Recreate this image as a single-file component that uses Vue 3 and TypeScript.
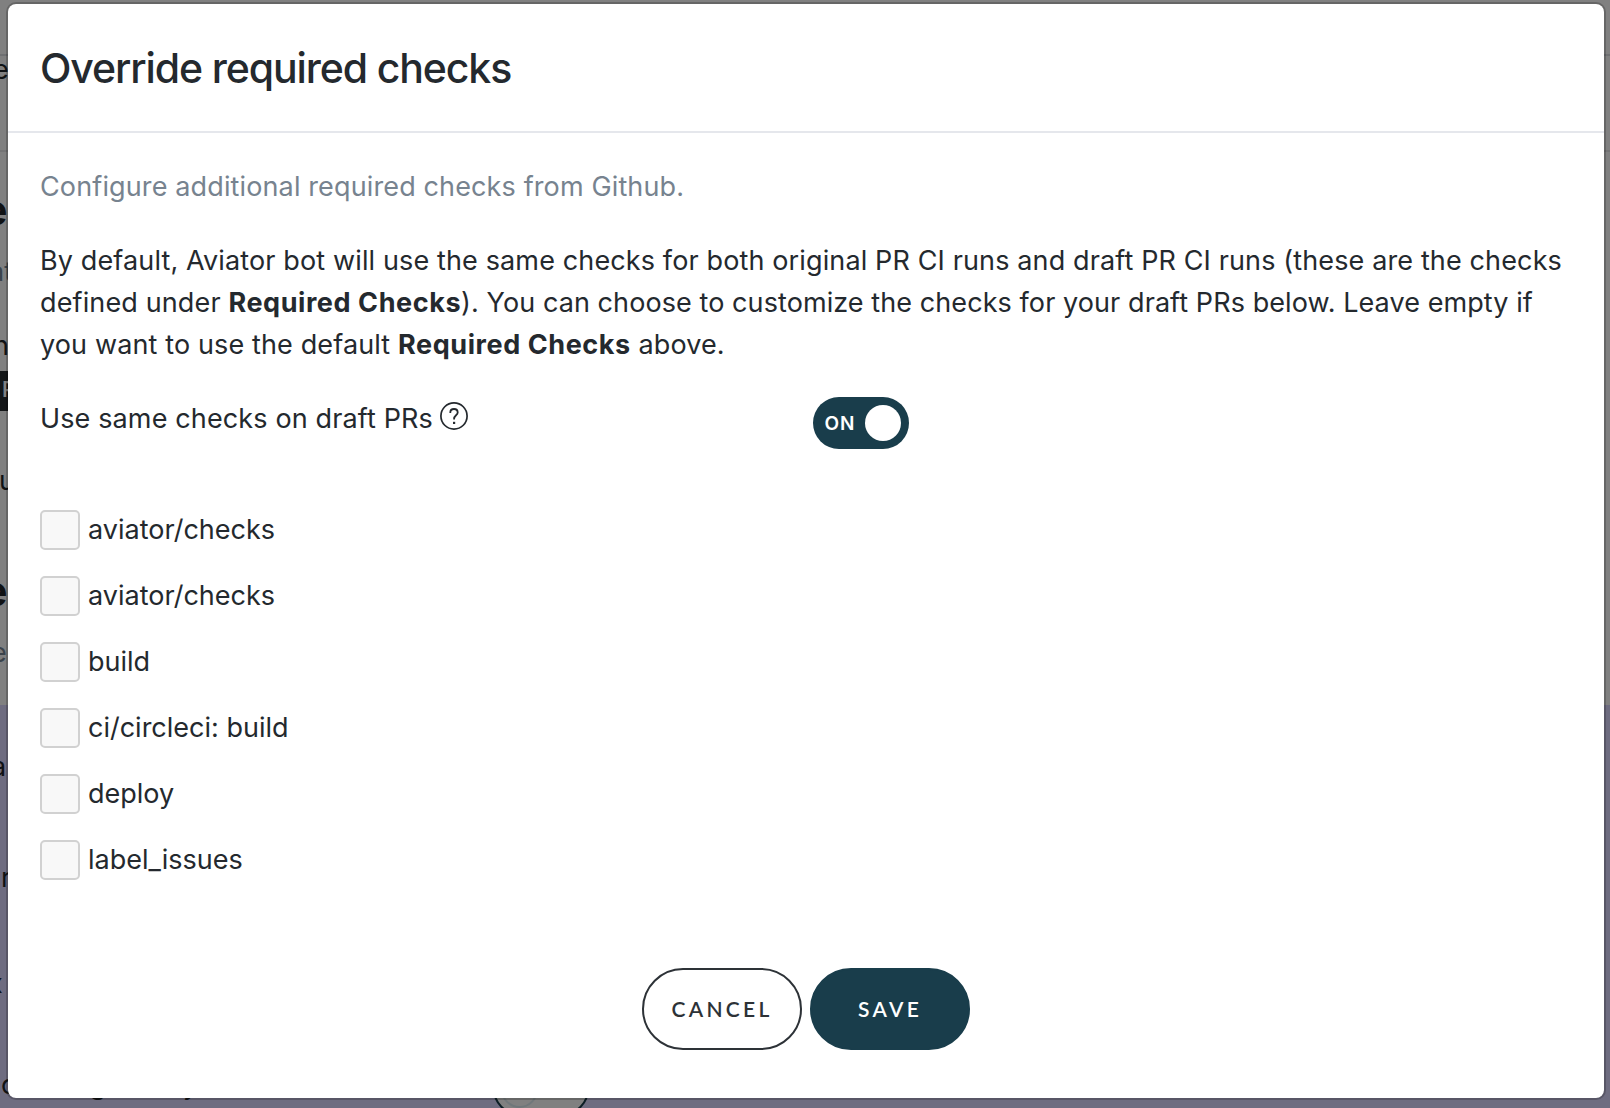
<script setup lang="ts">
import { ref } from 'vue'

interface Check {
  name: string
  checked: boolean
}

const checks = ref<Check[]>([
  { name: 'aviator/checks', checked: false },
  { name: 'aviator/checks', checked: false },
  { name: 'build', checked: false },
  { name: 'ci/circleci: build', checked: false },
  { name: 'deploy', checked: false },
  { name: 'label_issues', checked: false },
])

const sameOnDraft = ref(true)
</script>

<template>
  <div class="screen">
    <div class="page">
      <div class="page-nav"><span class="frag nav-frag">e</span></div>
      <div class="page-main">
        <span class="frag heading h-one">e</span>
        <span class="frag muted m-one">at</span>
        <span class="frag n-one">n</span>
        <span class="tag">P</span>
        <span class="frag u-one">u</span>
        <span class="frag heading h-two">e</span>
        <span class="frag muted m-two">e</span>
      </div>
      <div class="page-panel">
        <span class="frag p-a">a</span>
        <span class="frag p-r">r</span>
        <span class="frag p-x">x</span>
        <div class="panel-row">
          <span class="frag">c</span>
          <span class="frag p-g">g</span>
          <span class="frag p-y">y</span>
          <span class="off-toggle"><span class="off-knob"></span></span>
        </div>
      </div>
    </div>

    <div class="modal" role="dialog">
      <header class="modal-head">
        <h1>Override required checks</h1>
      </header>
      <div class="modal-body">
        <p class="lead">Configure additional required checks from Github.</p>
        <p>
          By default, Aviator bot will use the same checks for both original PR CI runs and draft PR CI runs (these are the checks<br />
          defined under <b>Required Checks</b><span class="tight">). You can choose to customize the checks for your draft PRs below. Leave empty if</span><br />
          you want to use the default <b>Required Checks</b> above.
        </p>
        <div class="setting">
          <div class="setting-label">
            <span>Use same checks on draft PRs</span>
            <svg class="help" viewBox="0 0 28 28" fill="none" stroke="#24292e">
              <circle cx="14" cy="14" r="13.1" stroke-width="1.7" />
              <path d="M10.3 10.9V10.4C10.3 8.3 11.8 7 14 7S17.7 8.4 17.7 10.4C17.7 13.2 14.1 13.3 14.1 16.7V17.5" stroke-width="1.8" />
              <path d="M14.1 19.8V22" stroke-width="2.2" />
            </svg>
          </div>
          <button class="toggle" type="button" @click="sameOnDraft = !sameOnDraft">
            <span class="toggle-text">{{ sameOnDraft ? 'ON' : 'OFF' }}</span>
            <span class="knob"></span>
          </button>
        </div>
        <div class="checks">
          <label v-for="(c, i) in checks" :key="i" class="check">
            <input v-model="c.checked" type="checkbox" />
            <span>{{ c.name }}</span>
          </label>
        </div>
        <footer class="actions">
          <button class="btn ghost" type="button">CANCEL</button>
          <button class="btn solid" type="button">SAVE</button>
        </footer>
      </div>
    </div>
  </div>
</template>

<style>
body {
  background: #808080;
}
</style>

<style scoped>
* {
  box-sizing: border-box;
}
.screen {
  width: 1610px;
  height: 1108px;
  display: grid;
  overflow: hidden;
  background: #808080;
  color: #24292e;
  font: 400 27px/42px Inter, 'Liberation Sans', sans-serif;
}
.page,
.modal {
  grid-area: 1 / 1;
}
.page {
  height: 1108px;
  overflow: hidden;
  display: flex;
  flex-direction: column;
  color: #101214;
}
.page-nav {
  flex: none;
  height: 98px;
  margin-top: 54px;
  border-top: 2px solid #6f7072;
  border-bottom: 2px solid #747475;
}
.page-main {
  flex: none;
  height: 553px;
  display: flow-root;
}
.frag {
  display: block;
  flex: none;
  height: 42px;
}
.nav-frag {
  margin: -7px 0 0 -7px;
}
.heading {
  font-size: 41px;
  font-weight: 700;
  margin-left: -17px;
}
.muted {
  color: #3b434b;
}
.h-one {
  margin-top: 37px;
}
.m-one {
  margin: 20px 0 0 -11px;
}
.n-one {
  margin: 32px 0 0 -7px;
}
.tag {
  display: block;
  width: 60px;
  height: 40px;
  margin-top: 4px;
  padding-left: 2px;
  background: #141618;
  color: #808080;
  font-size: 21px;
  font-weight: 600;
  line-height: 37px;
}
.u-one {
  margin: 49px 0 0 -1px;
}
.h-two {
  margin-top: 68px;
}
.m-two {
  margin: 20px 0 0 -9px;
}
.page-panel {
  flex: none;
  height: 403px;
  background: #6e6c80;
  display: flow-root;
}
.p-a {
  margin: 41px 0 0 -9px;
}
.p-r {
  margin: 69px 0 0 1px;
}
.p-x {
  margin: 64px 0 0 -12px;
}
.panel-row {
  display: flex;
  margin: 59px 0 0 1px;
}
.p-g {
  margin-left: 73px;
}
.p-y {
  margin-left: 77px;
}
.off-toggle {
  flex: none;
  width: 96px;
  height: 52px;
  margin: -1px 0 0 295px;
  padding: 6px;
  border: 2px solid #0c1e25;
  border-radius: 26px;
  background: #808080;
}
.off-knob {
  display: block;
  width: 37px;
  height: 37px;
  border: 2px solid #70777a;
  border-radius: 50%;
}
.modal {
  z-index: 1;
  width: 1600px;
  height: 1098px;
  margin: 2px 0 0 6px;
  border: 2px solid rgba(0, 0, 0, 0.2);
  border-radius: 10px;
  background: #fff;
  background-clip: padding-box;
}
.modal-head {
  height: 129px;
  padding: 32px;
  border-bottom: 2px solid #e5e7ec;
}
h1 {
  margin: 0;
  font-size: 41px;
  font-weight: 500;
  line-height: 65px;
  letter-spacing: -1.11px;
}
.modal-body {
  padding: 33px 32px 32px;
  letter-spacing: 0.13px;
}
p {
  margin: 0 0 32px;
  white-space: nowrap;
}
.lead {
  color: #77838f;
}
b {
  font-weight: 700;
  letter-spacing: 0.58px;
}
.tight {
  letter-spacing: 0.08px;
}
.setting {
  display: grid;
  grid-template-columns: 773px auto;
  justify-content: start;
  height: 61px;
}
.setting-label {
  display: flex;
  height: 42px;
}
.help {
  width: 28px;
  height: 28px;
  margin: 4px 0 0 7.5px;
}
.toggle {
  display: flex;
  align-items: center;
  justify-content: space-between;
  width: 96px;
  height: 52px;
  margin-top: -1px;
  padding: 0 8px 0 11.5px;
  border: 0;
  border-radius: 26px;
  background: #193d4b;
  color: #fff;
}
.toggle-text {
  padding-top: 2px;
  font: 600 19px/24px Inter, sans-serif;
  letter-spacing: 0.8px;
}
.knob {
  width: 36px;
  height: 36px;
  border-radius: 50%;
  background: #fff;
}
.checks {
  display: grid;
  gap: 26px;
  margin-top: 51px;
  letter-spacing: 0;
}
.check {
  display: flex;
  gap: 8px;
  height: 40px;
  line-height: 40px;
}
.check input {
  appearance: none;
  width: 40px;
  height: 40px;
  margin: 0;
  border: 2px solid #d1d1d1;
  border-radius: 5px;
  background: #f8f8f8;
}
.actions {
  display: flex;
  justify-content: center;
  gap: 8px;
  margin-top: 88px;
}
.btn {
  width: 160px;
  height: 82px;
  padding: 0;
  border: 2px solid #193d4b;
  border-radius: 41px;
  font: 600 21px/32px Lato, sans-serif;
  letter-spacing: 3.3px;
}
.ghost {
  border-color: #2d3237;
  background: #fff;
  color: #2d3237;
}
.solid {
  background: #193d4b;
  color: #fff;
}
</style>
